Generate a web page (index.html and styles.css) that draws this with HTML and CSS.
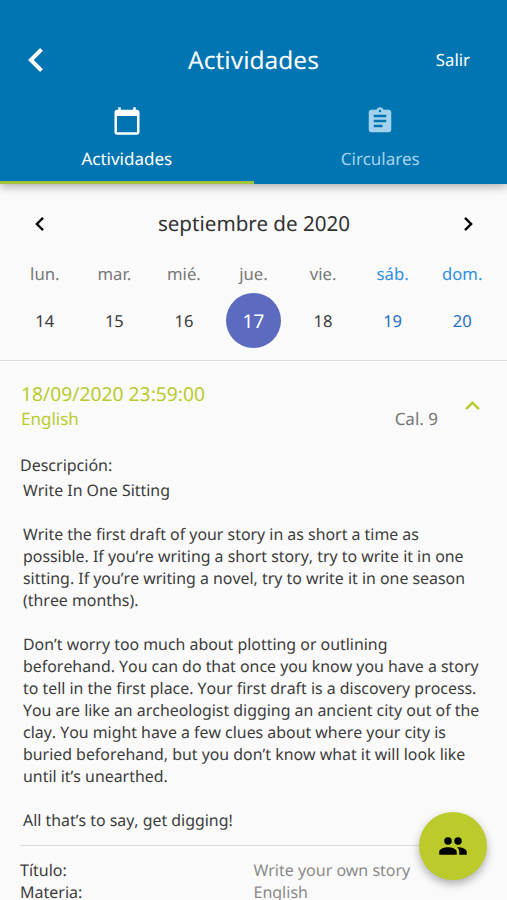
FILE: index.html
```html
<!DOCTYPE html>
<html lang="es">
<head>
    <meta charset="UTF-8">
    <meta name="viewport" content="width=device-width, initial-scale=1.0">
    <title>Actividades</title>
    <link rel="stylesheet" href="styles.css">
</head>
<body>
    <header class="header">
        <div class="topbar">
            <a href="#" class="back" aria-label="Volver">
                <svg viewBox="8 6 7.41 12"><path d="M15.41 7.41L14 6l-6 6 6 6 1.41-1.41L10.83 12z"/></svg>
            </a>
            <h1>Actividades</h1>
            <a href="#" class="logout">Salir</a>
        </div>
        <nav class="tabs">
            <a href="#" class="tab active">
                <svg class="icon" viewBox="0 0 24 24"><path d="M20 3h-1V1h-2v2H7V1H5v2H4c-1.100 0-2 .9-2 2v16c0 1.100.9 2 2 2h16c1.100 0 2-.9 2-2V5c0-1.100-.9-2-2-2zm0 18H4V8h16v13z"/></svg>
                <span>Actividades</span>
            </a>
            <a href="#" class="tab">
                <svg class="icon" viewBox="0 0 24 24"><path d="M19 3h-4.180C14.400 1.840 13.300 1 12 1c-1.300 0-2.400.84-2.820 2H5c-1.100 0-2 .9-2 2v14c0 1.100.9 2 2 2h14c1.100 0 2-.9 2-2V5c0-1.100-.9-2-2-2zm-7 0c.55 0 1 .45 1 1s-.45 1-1 1-1-.45-1-1 .45-1 1-1zm2 14H7v-2h7v2zm3-4H7v-2h10v2zm0-4H7V7h10v2z"/></svg>
                <span>Circulares</span>
            </a>
        </nav>
    </header>

    <section class="calendar">
        <div class="month">
            <svg class="arrow" viewBox="8 6 7.41 12"><path d="M15.41 7.41L14 6l-6 6 6 6 1.41-1.41L10.83 12z"/></svg>
            <h2>septiembre de 2020</h2>
            <svg class="arrow" viewBox="8.59 6 7.41 12"><path d="M10 6L8.590 7.410 13.170 12l-4.580 4.590L10 18l6-6z"/></svg>
        </div>
        <div class="week">
            <div class="day"><span class="name">lun.</span><span class="number">14</span></div>
            <div class="day"><span class="name">mar.</span><span class="number">15</span></div>
            <div class="day"><span class="name">mié.</span><span class="number">16</span></div>
            <div class="day selected"><span class="name">jue.</span><span class="number">17</span></div>
            <div class="day"><span class="name">vie.</span><span class="number">18</span></div>
            <div class="day weekend"><span class="name">sáb.</span><span class="number">19</span></div>
            <div class="day weekend"><span class="name">dom.</span><span class="number">20</span></div>
        </div>
    </section>

    <main class="activity">
        <div class="activity-header">
            <div>
                <div class="date">18/09/2020 23:59:00</div>
                <div class="subject">English</div>
            </div>
            <div class="grade">Cal. 9</div>
            <svg class="collapse" viewBox="6 8 12 7.41"><path d="M12 8l-6 6 1.410 1.410L12 10.830l4.590 4.580L18 14z"/></svg>
        </div>

        <div class="label">Descripción:</div>
        <div class="description">
            <p>Write In One Sitting</p>
            <p>Write the first draft of your story in as short a time as<br>
            possible. If you’re writing a short story, try to write it in one<br>
            sitting. If you’re writing a novel, try to write it in one season<br>
            (three months).</p>
            <p>Don’t worry too much about plotting or outlining<br>
            beforehand. You can do that once you know you have a story<br>
            to tell in the first place. Your first draft is a discovery process.<br>
            You are like an archeologist digging an ancient city out of the<br>
            clay. You might have a few clues about where your city is<br>
            buried beforehand, but you don’t know what it will look like<br>
            until it’s unearthed.</p>
            <p>All that’s to say, get digging!</p>
        </div>

        <dl class="details">
            <dt>Título:</dt>
            <dd>Write your own story</dd>
            <dt>Materia:</dt>
            <dd>English</dd>
        </dl>
    </main>

    <button class="fab" aria-label="Grupo">
        <svg class="icon" viewBox="0 0 24 24"><path d="M16 13c-.29 0-.62 0-.97.05C16.190 13.890 17 15 17 16.500V19h6v-2.500c0-2.330-4.670-3.500-7-3.500M8 13c-2.330 0-7 1.170-7 3.500V19h14v-2.500c0-2.330-4.670-3.500-7-3.500M8 11a3 3 0 0 0 0-6 3 3 0 0 0 0 6M16 11a3 3 0 0 0 0-6 3 3 0 0 0 0 6"/></svg>
    </button>
</body>
</html>
```
FILE: styles.css
```css
* {
    box-sizing: border-box;
}
body {
    margin: 0;
    height: 900px;
    overflow: hidden;
    font-family: 'Noto Sans', 'Open Sans', sans-serif;
    font-size: 16px;
    color: #3c3c3c;
    background-color: #fafafa;
    text-rendering: geometricPrecision;
}
h1, h2, p, dl, dd {
    margin: 0;
    font-weight: normal;
}
a {
    color: inherit;
    text-decoration: none;
}
svg {
    display: block;
    fill: currentColor;
}
.icon {
    width: 30px;
    height: 30px;
}
.header {
    height: 184px;
    padding-top: 30px;
    color: white;
    background-color: #0075b2;
    box-shadow: 0 2px 10px rgba(0,0,0,0.35);
}
.topbar {
    display: grid;
    grid-template-columns: 100px 1fr 100px;
    align-items: center;
    height: 60px;
    padding: 0 9px 0 0;
}
.back {
    padding-left: 28px;
}
.back svg {
    width: 15px;
    height: 24px;
}
h1 {
    padding: 0 0 0 9px;
    font-size: 24.5px;
    text-align: center;
}
.logout {
    padding: 0 28px 1px 0;
    font-size: 16.8px;
    text-align: right;
    white-space: nowrap;
}
.tabs {
    display: grid;
    grid-template-columns: 1fr 1fr;
    height: 94px;
}
.tab {
    display: flex;
    flex-direction: column;
    align-items: center;
    padding-top: 16px;
    font-size: 17px;
    line-height: 22px;
    color: #a3d3ec;
    border-bottom: 3px solid transparent;
}
.tab span {
    margin-top: 12px;
}
.tab.active {
    color: white;
    border-bottom-color: #a5c43c;
}
.calendar {
    height: 177px;
    padding-top: 20px;
    border-bottom: 1px solid #dcdcdc;
}
.month {
    display: flex;
    justify-content: space-between;
    align-items: center;
    height: 39px;
    padding: 0 34px 0 35px;
}
.month h2 {
    font-size: 20.6px;
    color: #333;
}
.arrow {
    width: 9px;
    height: 14px;
    color: black;
}
.week {
    display: grid;
    grid-template-columns: repeat(7, 1fr);
    padding: 0 10px;
}
.day {
    display: flex;
    flex-direction: column;
    align-items: center;
}
.name {
    height: 50px;
    font-size: 16.7px;
    line-height: 62px;
    color: #777;
}
.number {
    width: 55px;
    height: 55px;
    font-size: 16.5px;
    line-height: 56px;
    text-align: center;
    border-radius: 50%;
}
.selected .number {
    font-size: 19px;
    color: white;
    background-color: #5c6bc0;
}
.weekend .name {
    color: #2d8fdd;
}
.weekend .number {
    color: #2470c4;
}
.activity {
    padding: 20px 20px 0;
}
.activity-header {
    display: flex;
    align-items: flex-end;
    height: 50px;
    padding-left: 1px;
    color: #b9cb2d;
}
.date {
    font-size: 19.3px;
    line-height: 26px;
}
.subject, .grade {
    font-size: 17px;
    line-height: 24px;
}
.grade {
    margin-left: auto;
    color: #777;
}
.collapse {
    width: 15px;
    height: 9px;
    margin: 0 7px 21px 27px;
}
.label {
    margin-top: 22px;
    line-height: 24px;
}
.description {
    padding: 2px 0 0 3px;
    font-size: 15.9px;
    line-height: 22px;
    font-kerning: none;
    white-space: nowrap;
}
.description p {
    margin-bottom: 22px;
}
.description p:last-child {
    margin-bottom: 14px;
}
.details {
    display: grid;
    grid-template-columns: 1fr 1fr;
    padding-top: 13px;
    line-height: 22px;
    border-top: 1px solid #dcdcdc;
}
.details dd {
    color: #8a8a8a;
}
.fab {
    position: absolute;
    top: 812px;
    left: 419px;
    display: flex;
    align-items: center;
    justify-content: center;
    width: 68px;
    height: 68px;
    padding: 0;
    color: black;
    background-color: #bbcb2b;
    border: none;
    border-radius: 50%;
    box-shadow: 0 4px 8px rgba(0,0,0,0.3);
}
```
